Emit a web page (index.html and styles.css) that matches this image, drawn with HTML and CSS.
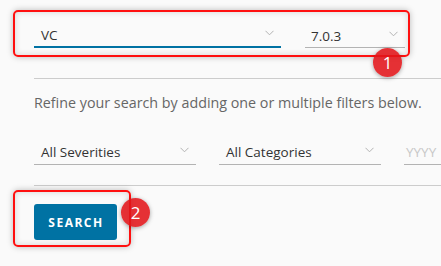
FILE: index.html
```html
<!DOCTYPE html>
<html lang="en">
<head>
    <meta charset="UTF-8">
    <meta name="viewport" content="width=device-width, initial-scale=1.0">
    <title>Advisory Search</title>
    <link rel="stylesheet" href="styles.css">
</head>
<body>
    <div class="page">
        <div class="product-row">
            <div class="select select-product active">
                <span>VC</span>
                <svg class="chevron" width="9" height="6" viewBox="0 0 9 6"><path d="M0.5 0.8 L4.5 4.8 L8.5 0.8" fill="none" stroke="#b3b3b3" stroke-width="1"/></svg>
            </div>
            <div class="select select-version">
                <span>7.0.3</span>
                <svg class="chevron" width="9" height="6" viewBox="0 0 9 6"><path d="M0.5 0.8 L4.5 4.8 L8.5 0.8" fill="none" stroke="#b3b3b3" stroke-width="1"/></svg>
            </div>
        </div>

        <div class="divider"></div>

        <p class="hint">Refine your search by adding one or multiple filters below.</p>

        <div class="filters">
            <div class="select select-filter">
                <span>All Severities</span>
                <svg class="chevron" width="9" height="6" viewBox="0 0 9 6"><path d="M0.5 0.8 L4.5 4.8 L8.5 0.8" fill="none" stroke="#b3b3b3" stroke-width="1"/></svg>
            </div>
            <div class="select select-filter">
                <span>All Categories</span>
                <svg class="chevron" width="9" height="6" viewBox="0 0 9 6"><path d="M0.5 0.8 L4.5 4.8 L8.5 0.8" fill="none" stroke="#b3b3b3" stroke-width="1"/></svg>
            </div>
            <div class="date-input">
                <span>YYYY</span>
            </div>
        </div>

        <div class="divider divider-bottom"></div>

        <button class="search-btn">SEARCH</button>

        <!-- annotation overlays -->
        <div class="mark mark-1"></div>
        <div class="badge badge-1">1</div>
        <div class="mark mark-2"></div>
        <div class="badge badge-2">2</div>
    </div>
</body>
</html>
```

FILE: styles.css
```css
body {
    margin: 0;
    background-color: #fafafa;
    font-family: "Open Sans", Arial, sans-serif;
    overflow: hidden;
}
.page {
    position: relative;
    height: 266px;
    padding-left: 34px;
    padding-top: 24px;
    box-sizing: border-box;
}
.product-row {
    display: flex;
    gap: 24px;
}
.select {
    display: flex;
    align-items: center;
    justify-content: space-between;
    box-sizing: border-box;
    height: 24px;
    padding: 0 7px;
    border-bottom: 1px solid #b3b3b3;
    font-size: 13.5px;
    color: #333;
}
.select .chevron {
    margin-top: -4px;
}
.select-product {
    width: 247px;
}
.select-product.active {
    border-bottom: 2px solid #0072a3;
}
.select-version {
    width: 100px;
    padding-left: 6px;
}
.divider {
    height: 1px;
    background-color: #cccccc;
    margin-top: 30px;
}
.hint {
    margin: 16px 0 0 0;
    font-size: 14.3px;
    line-height: 16px;
    color: #666;
    white-space: nowrap;
}
.filters {
    display: flex;
    gap: 23px;
    margin-top: 29px;
}
.select-filter {
    width: 162px;
    height: 25px;
    font-size: 13.5px;
}
.date-input {
    flex: 1;
    box-sizing: border-box;
    height: 25px;
    border-bottom: 1px solid #b3b3b3;
    font-size: 13.5px;
    color: #c8c8c8;
    display: flex;
    align-items: center;
    padding-left: 2px;
    overflow: hidden;
    white-space: nowrap;
}
.divider-bottom {
    margin-top: 20px;
}
.search-btn {
    display: block;
    margin-top: 18px;
    width: 83px;
    height: 36px;
    border: none;
    border-radius: 3px;
    background-color: #0072a3;
    color: #fff;
    font-family: "Open Sans", Arial, sans-serif;
    font-size: 12px;
    font-weight: bold;
    letter-spacing: 1.5px;
    padding: 0 0 0 1px;
}

/* red annotation boxes */
.mark {
    position: absolute;
    border: 2px solid #ff1010;
    border-radius: 5px;
    box-shadow: 0 0 6px rgba(0,0,0,0.25), inset 0 0 6px rgba(0,0,0,0.15);
}
.mark-1 {
    left: 13px;
    top: 10px;
    width: 393px;
    height: 43px;
}
.mark-2 {
    left: 13px;
    top: 190px;
    width: 114px;
    height: 53px;
}
.badge {
    position: absolute;
    width: 29px;
    height: 29px;
    border-radius: 50%;
    background-color: rgba(225, 20, 25, 0.88);
    box-shadow: 0 1px 4px rgba(0,0,0,0.35);
    color: #fff;
    font-family: "Open Sans", Arial, sans-serif;
    font-size: 17px;
    display: flex;
    align-items: center;
    justify-content: center;
}
.badge-1 {
    left: 373px;
    top: 48px;
}
.badge-2 {
    left: 121px;
    top: 198px;
}
```
